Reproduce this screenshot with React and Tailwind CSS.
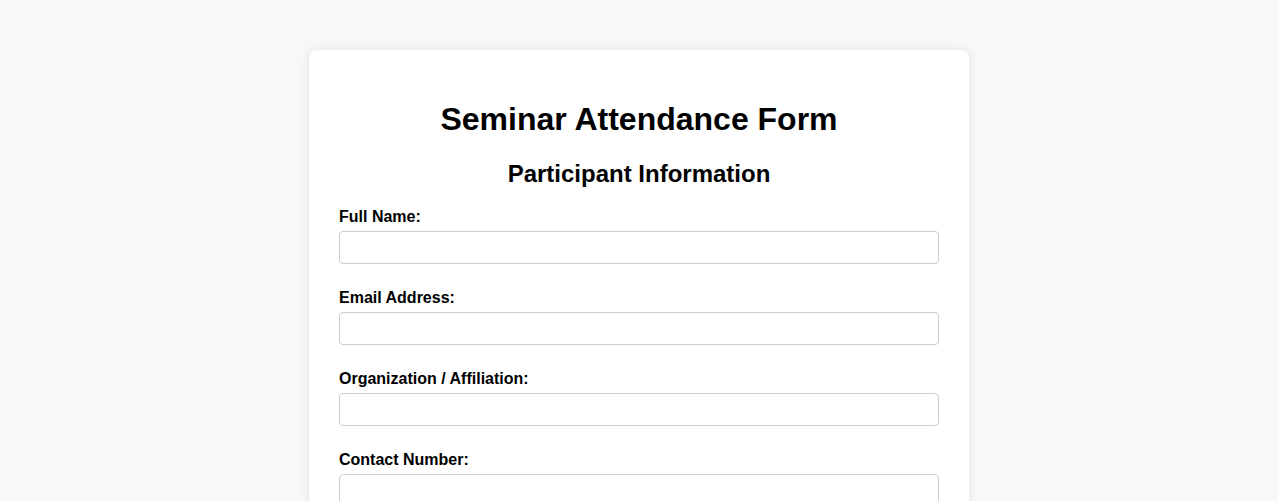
const fields = ['Full Name:', 'Email Address:', 'Organization / Affiliation:', 'Contact Number:'];

export default function App() {
  return (
    <div className="min-h-screen bg-[#f8f8f8] pt-[50px] pb-[50px] text-black" style={{ fontFamily: '"Liberation Sans", Arial, sans-serif' }}>
      <div className="mx-auto w-[660px] rounded-lg bg-white p-[30px] shadow-[0_0_10px_rgba(0,0,0,0.1)]">
        <h1 className="mt-[21px] mb-[22px] text-center text-[32px] font-bold leading-[37px]">Seminar Attendance Form</h1>
        <h2 className="mb-[20px] text-center text-[24px] font-bold leading-[28px]">Participant Information</h2>
        {fields.map((f) => (
          <div key={f} className="mb-[25px]">
            <label className="mb-[5px] block text-[16px] font-bold leading-[18px]">{f}</label>
            <input type="text" className="block h-[33px] w-full rounded border border-[#ccc] px-2 text-[14px] outline-none" />
          </div>
        ))}
      </div>
    </div>
  );
}
